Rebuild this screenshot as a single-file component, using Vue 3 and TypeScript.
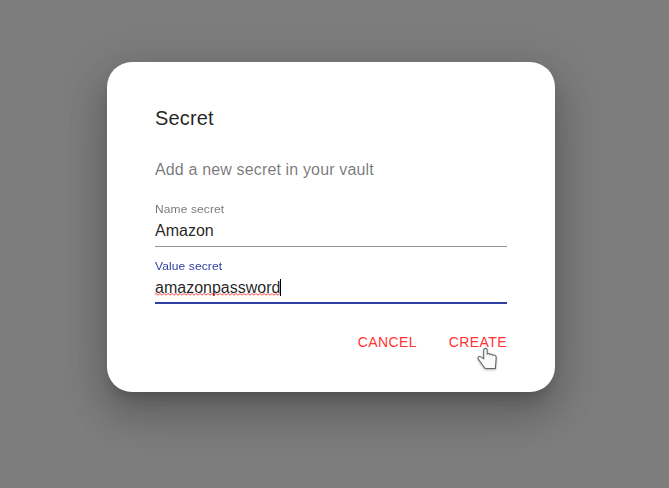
<script setup lang="ts">
import { ref } from 'vue'

const name = ref<string>('Amazon')
const value = ref<string>('amazonpassword')
</script>

<template>
  <main class="backdrop">
    <section class="dialog" role="dialog">
      <h2>Secret</h2>
      <p class="description">Add a new secret in your vault</p>
      <div class="field">
        <label>Name secret</label>
        <div class="input">{{ name }}</div>
      </div>
      <div class="field focused">
        <label>Value secret</label>
        <div class="input">
          <span class="misspelled">{{ value }}<svg class="squiggle" width="125" height="3">
            <defs>
              <pattern id="wave" width="4" height="3" patternUnits="userSpaceOnUse">
                <path d="M-1 2.2 1 .5 3 2.2 5 .5" />
              </pattern>
            </defs>
            <rect class="wave-line" width="125" height="3" fill="url(#wave)" />
          </svg></span><i class="caret"></i>
        </div>
      </div>
      <footer>
        <button>CANCEL</button>
        <button class="create">CREATE
          <svg class="cursor" viewBox="0 0 22 24" width="22" height="24">
            <path d="M7.7 11.7V3.2C7.7.8 11.2.8 11.2 3.2V7c.7-.8 2.2-.6 2.7.5.8-.7 2.3-.4 2.7.7 1.1-.6 3.5.1 3.6 2l-.8 11.3H9.3L6.9 18.5 2.1 11.8C1.3 10.1 3.3 8.8 4.8 9.9z" />
          </svg>
        </button>
      </footer>
    </section>
  </main>
</template>

<style>
body { margin: 0; }
</style>

<style scoped>
.backdrop { box-sizing: border-box; width: 669px; height: 488px; padding: 62px 107px; background: #7d7d7d; overflow: hidden; font-family: "Liberation Sans", Arial, sans-serif; }
.dialog { box-sizing: border-box; width: 448px; height: 330px; padding: 40px 48px; border-radius: 25px; background: #fff; box-shadow: 0 11px 15px -7px rgba(0,0,0,.2), 0 24px 38px 3px rgba(0,0,0,.14), 0 9px 46px 8px rgba(0,0,0,.12); color: rgba(0,0,0,.87); }
h2 { margin: 0; font-size: 20px; line-height: 32px; font-weight: 400; letter-spacing: .15px; }
.description { margin: 24px 0 0; font-size: 16px; line-height: 24px; letter-spacing: .15px; color: rgba(0,0,0,.54); }
.field { height: 43px; margin-top: 21px; border-bottom: 1px solid #949494; }
.field label { display: block; height: 12px; font-size: 16px; line-height: 17px; letter-spacing: .15px; color: rgba(0,0,0,.54); transform: scale(.75, .69); transform-origin: top left; }
.input { display: flex; align-items: center; height: 31px; font-size: 16px; line-height: 19px; }
.focused { margin-top: 13px; height: 42px; border-bottom: 2px solid #303f9f; }
.focused label { color: #303f9f; }
.misspelled { position: relative; }
.squiggle { position: absolute; left: 0; top: 15px; fill: none; stroke: #ff2020; stroke-width: .8; }
.wave-line { stroke: none; }
.caret { width: 1px; height: 17px; background: #000; }
footer { display: flex; justify-content: flex-end; gap: 32px; margin-top: 26px; }
button { position: relative; padding: 0; border: 0; background: none; font: 14px/24px "Liberation Sans", Arial, sans-serif; letter-spacing: .4px; color: #ff3333; }
.cursor { position: absolute; left: 27px; top: 17px; fill: #fafafa; stroke: #626969; stroke-width: 1.1; overflow: visible; filter: drop-shadow(0 1px 1px rgba(0,0,0,.3)); }
</style>
